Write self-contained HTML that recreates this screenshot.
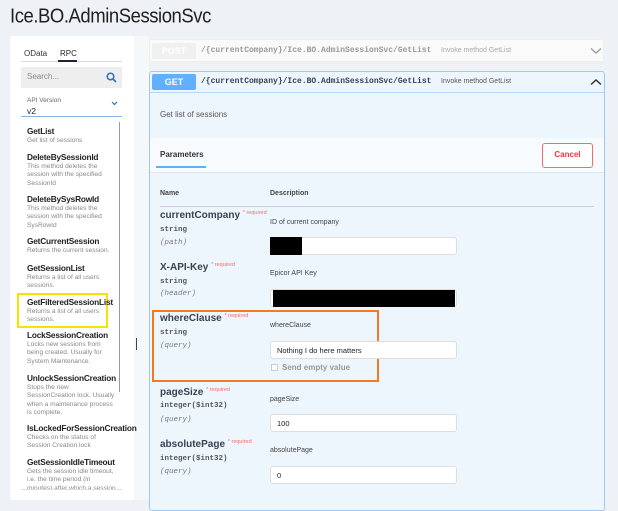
<!DOCTYPE html>
<html><head><style>
*{margin:0;padding:0;box-sizing:border-box}
body{width:618px;height:500px;overflow:hidden;background:#eef1f5;font-family:"Liberation Sans",sans-serif;position:relative;color:#3b4151}
.a{position:absolute;white-space:nowrap}
.mono{font-family:"Liberation Mono",monospace}
.it{font-style:italic;color:#777;font-size:7.5px}
.nm{font-size:10px;font-weight:bold;color:#3b4151}
.req{font-size:5.5px;color:#f66;vertical-align:top;font-weight:normal}
.st{font-size:7.5px;font-weight:bold;color:#555}
.ds{font-size:7px;color:#444}
.inp{position:absolute;background:#fff;border:1px solid #ddd;border-radius:3px;height:18px;font-size:7.5px;color:#222;padding:4px 6px}
.li b{display:block;font-size:8.3px;color:#222;letter-spacing:-0.2px;line-height:11px}
.li span{display:block;font-size:6.6px;color:#888;line-height:8.3px;white-space:normal}
.li{position:absolute;left:27px;width:90px}
</style></head><body>
<div class="a" style="left:10px;top:4px;font-size:18.5px;letter-spacing:-0.45px;color:#1f1f1f;transform:scaleY(1.1);transform-origin:top left">Ice.BO.AdminSessionSvc</div>
<!-- sidebar -->
<div class="a" style="left:10px;top:36px;width:124px;height:464px;background:#fff"></div>
<div class="a" style="left:134px;top:36px;width:15px;height:464px;background:#f6f7f9"></div>
<div class="a" style="left:24px;top:49px;font-size:8px;color:#333">OData</div>
<div class="a" style="left:60px;top:49px;font-size:8px;color:#223">RPC</div>
<div class="a" style="left:21px;top:61px;width:101px;height:1px;background:#ddd"></div>
<div class="a" style="left:58px;top:60px;width:19px;height:2px;background:#223"></div>
<div class="a" style="left:21px;top:67px;width:101px;height:21px;background:#eee"></div>
<div class="a" style="left:27px;top:72px;font-size:8px;color:#888">Search...</div>
<svg class="a" style="left:106px;top:72px" width="11" height="11"><circle cx="4.5" cy="4.5" r="3.3" fill="none" stroke="#2a6fc9" stroke-width="1.5"/><line x1="7" y1="7" x2="10" y2="10" stroke="#2a6fc9" stroke-width="1.6"/></svg>
<div class="a" style="left:27px;top:97px;font-size:6.5px;color:#666">API Version</div>
<div class="a" style="left:27px;top:106px;font-size:8.5px;color:#222">v2</div>
<svg class="a" style="left:111px;top:101px" width="7" height="5"><path d="M1 1L3.5 3.5L6 1" fill="none" stroke="#2a6fc9" stroke-width="1.2"/></svg>
<div class="a" style="left:21px;top:116px;width:101px;height:1px;background:#8ab4e0"></div>
<div class="a" style="left:119px;top:122px;width:1px;height:270px;background:#999"></div>
<div class="a" style="left:136px;top:338px;width:1px;height:12px;background:#444"></div>
<div class="li" style="top:126px"><b>GetList</b><span>Get list of sessions</span></div>
<div class="li" style="top:152px"><b>DeleteBySessionId</b><span>This method deletes the session with the specified SessionId</span></div>
<div class="li" style="top:194px"><b>DeleteBySysRowId</b><span>This method deletes the session with the specified SysRowId</span></div>
<div class="li" style="top:236px"><b>GetCurrentSession</b><span>Returns the current session.</span></div>
<div class="li" style="top:263px"><b>GetSessionList</b><span>Returns a list of all users sessions.</span></div>
<div class="a" style="left:17px;top:293px;width:91px;height:35px;border:2px solid #f5e400"></div>
<div class="li" style="top:297px"><b>GetFilteredSessionList</b><span>Returns a list of all users sessions.</span></div>
<div class="li" style="top:330px"><b>LockSessionCreation</b><span>Locks new sessions from being created. Usually for System Maintenance.</span></div>
<div class="li" style="top:373px"><b>UnlockSessionCreation</b><span>Stops the new SessionCreation lock. Usually when a maintenance process is complete.</span></div>
<div class="li" style="top:423px;width:100px"><b>IsLockedForSessionCreation</b><span style="width:90px">Checks on the status of Session Creation lock</span></div>
<div class="li" style="top:457px;height:32px;overflow:hidden"><b>GetSessionIdleTimeout</b><span>Gets the session idle timeout, i.e. the time period (in minutes) after which a session</span></div>
<div class="a" style="left:21px;top:489px;width:101px;height:1px;background:#ddd"></div>
<!-- POST row -->
<div class="a" style="left:149px;top:39px;width:455px;height:23px;background:#fafafa;border:1px solid #eee;border-radius:3px"></div>
<div class="a" style="left:152px;top:43px;width:44px;height:16px;background:#f0f0f0;border-radius:2px;color:#fff;font-size:9px;font-weight:bold;text-align:center;line-height:16px">POST</div>
<div class="a mono" style="left:201px;top:46px;font-size:8px;color:#999;font-weight:bold">/{currentCompany}/Ice.BO.AdminSessionSvc/GetList</div>
<div class="a" style="left:441px;top:47px;font-size:7px;color:#aaa">Invoke method GetList</div>
<svg class="a" style="left:590px;top:47px" width="12" height="8"><path d="M1 1.5L6 6L11 1.5" fill="none" stroke="#999" stroke-width="1.3"/></svg>
<!-- GET block -->
<div class="a" style="left:149px;top:71px;width:456px;height:440px;background:#eef6fd;border:1px solid #9ccaf6;border-radius:3px"></div>
<div class="a" style="left:150px;top:72px;width:454px;height:21px;border-bottom:1px solid #b5d8f8"></div>
<div class="a" style="left:152px;top:74px;width:44px;height:16px;background:#61affe;border-radius:2px;color:#fff;font-size:9px;font-weight:bold;text-align:center;line-height:16px">GET</div>
<div class="a mono" style="left:201px;top:77px;font-size:8px;color:#3b4151;font-weight:bold">/{currentCompany}/Ice.BO.AdminSessionSvc/GetList</div>
<div class="a" style="left:441px;top:78px;font-size:7px;color:#555">Invoke method GetList</div>
<svg class="a" style="left:590px;top:78px" width="12" height="8"><path d="M1 6.5L6 2L11 6.5" fill="none" stroke="#333" stroke-width="1.5"/></svg>
<div class="a" style="left:160px;top:110px;font-size:8px;color:#555">Get list of sessions</div>
<div class="a" style="left:150px;top:138px;width:454px;height:35px;background:#f8fbfe;border-bottom:1px solid #dde8f2"></div>
<div class="a" style="left:160px;top:150px;font-size:8px;font-weight:bold;color:#333">Parameters</div>
<div class="a" style="left:156px;top:166px;width:50px;height:2px;background:#61affe"></div>
<div class="a" style="left:542px;top:143px;width:51px;height:25px;border:1.5px solid #f56a6a;border-radius:3px;background:#fff;color:#f33;font-size:8px;font-weight:bold;text-align:center;line-height:22px">Cancel</div>
<div class="a" style="left:160px;top:190px;font-size:7px;font-weight:bold;color:#444">Name</div>
<div class="a" style="left:270px;top:190px;font-size:7px;font-weight:bold;color:#444">Description</div>
<div class="a" style="left:160px;top:206px;width:434px;height:1px;background:#ccd"></div>

<div class="a nm" style="left:160px;top:210px">currentCompany <span class="req">* required</span></div>
<div class="a mono st" style="left:160px;top:226px">string</div>
<div class="a mono it" style="left:160px;top:239px">(path)</div>
<div class="a ds" style="left:270px;top:219px">ID of current company</div>
<div class="inp" style="left:270px;top:237px;width:187px"></div>
<div class="a" style="left:270px;top:237px;width:32px;height:18px;background:#000"></div>

<div class="a nm" style="left:160px;top:262px">X-API-Key <span class="req">* required</span></div>
<div class="a mono st" style="left:160px;top:278px">string</div>
<div class="a mono it" style="left:160px;top:290px">(header)</div>
<div class="a ds" style="left:270px;top:270px">Epicor API Key</div>
<div class="inp" style="left:270px;top:289px;width:187px"></div>
<div class="a" style="left:273px;top:290px;width:182px;height:17px;background:#000"></div>

<div class="a" style="left:152px;top:310px;width:227px;height:72px;border:2px solid #f47a20"></div>
<div class="a nm" style="left:160px;top:313px">whereClause <span class="req">* required</span></div>
<div class="a mono st" style="left:160px;top:329px">string</div>
<div class="a mono it" style="left:160px;top:342px">(query)</div>
<div class="a ds" style="left:270px;top:322px">whereClause</div>
<div class="inp" style="left:270px;top:341px;width:187px">Nothing I do here matters</div>
<div class="a" style="left:271px;top:364px;width:7px;height:7px;border:1px solid #ccc;background:#fff"></div>
<div class="a" style="left:282px;top:363px;font-size:8px;color:#999;font-weight:bold">Send empty value</div>

<div class="a nm" style="left:160px;top:387px">pageSize <span class="req">* required</span></div>
<div class="a mono st" style="left:160px;top:402px">integer($int32)</div>
<div class="a mono it" style="left:160px;top:416px">(query)</div>
<div class="a ds" style="left:270px;top:396px">pageSize</div>
<div class="inp" style="left:270px;top:414px;width:187px">100</div>

<div class="a nm" style="left:160px;top:439px">absolutePage <span class="req">* required</span></div>
<div class="a mono st" style="left:160px;top:455px">integer($int32)</div>
<div class="a mono it" style="left:160px;top:468px">(query)</div>
<div class="a ds" style="left:270px;top:447px">absolutePage</div>
<div class="inp" style="left:270px;top:466px;width:187px">0</div>
</body></html>
